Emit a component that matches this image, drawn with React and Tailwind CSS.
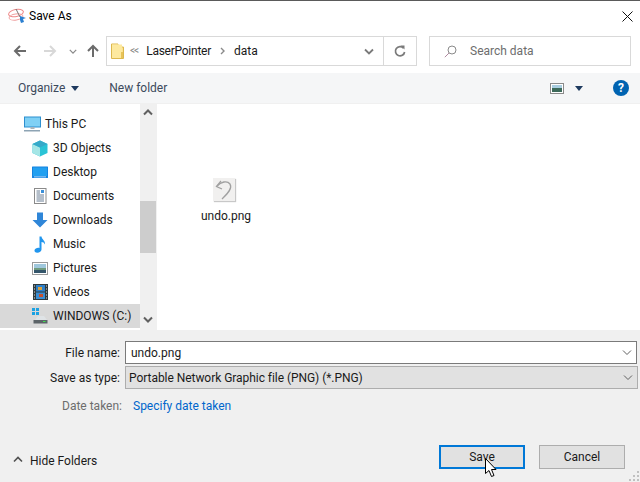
const F = { fontFamily: 'Roboto, "Open Sans", sans-serif' };

function Chevron({ up, className = "", color = "#5a5a5a", w = 1.6, size = 10 }) {
  return (
    <svg width={size} height="7" viewBox="0 0 10 7" className={className}>
      <path d={up ? "M1 5.5 L5 1.5 L9 5.5" : "M1 1.5 L5 5.5 L9 1.5"} fill="none" stroke={color} strokeWidth={w} />
    </svg>
  );
}

function Caret({ color = "#1e3a5f" }) {
  return (
    <svg width="8" height="5" viewBox="0 0 8 5"><path d="M0 0H8L4 5Z" fill={color} /></svg>
  );
}

function AppIcon() {
  return (
    <svg width="18" height="18" viewBox="0 0 18 18">
      <ellipse cx="8" cy="6" rx="7.5" ry="3.6" fill="none" stroke="#e88" strokeWidth="1" transform="rotate(-12 8 6)" />
      <ellipse cx="8" cy="10" rx="7" ry="3" fill="none" stroke="#f0a0a0" strokeWidth="1" transform="rotate(-8 8 10)" />
      <path d="M8 2 L12 10" stroke="#777" strokeWidth="1" />
      <path d="M12 9 L18 11 L15 12 L16 15 L13 16 L12 13 Z" fill="#2a7fd0" />
    </svg>
  );
}

function ArrowIcon({ color, dir = "left" }) {
  const d = dir === "left" ? "M13 7H2 M7 2 L2 7 L7 12" : dir === "right" ? "M1 7H12 M7 2 L12 7 L7 12" : "M7 13V2 M2 7 L7 2 L12 7";
  return (
    <svg width="14" height="14" viewBox="0 0 14 14"><path d={d} fill="none" stroke={color} strokeWidth="2" /></svg>
  );
}

const icons = {
  pc: (
    <svg width="17" height="17" viewBox="0 0 17 17">
      <rect x="0.5" y="1" width="16" height="10" fill="#7fd0f5" stroke="#2d8fcf" />
      <rect x="6.5" y="11" width="4" height="2" fill="#aab4bc" />
      <rect x="0" y="14" width="16" height="1.5" fill="#8ea4b4" />
    </svg>
  ),
  cube: (
    <svg width="16" height="17" viewBox="0 0 16 17">
      <path d="M8 0.5 L15.5 4 V13 L8 16.5 L0.5 13 V4 Z" fill="#2ac3d6" />
      <path d="M0.5 4 L8 7.5 V16.5 L0.5 13 Z" fill="#a5e6e6" />
      <path d="M8 0.5 L15.5 4 L8 7.5 L0.5 4 Z" fill="#36a9c9" />
    </svg>
  ),
  desktop: (
    <svg width="16" height="13" viewBox="0 0 16 13">
      <rect x="0" y="0.5" width="16" height="11.5" rx="0.5" fill="#1583e0" />
      <rect x="1" y="1.5" width="14" height="8.5" fill="#22a0f0" />
      <rect x="2" y="10.5" width="12" height="0.8" fill="#cfeaff" />
    </svg>
  ),
  doc: (
    <svg width="13" height="16" viewBox="0 0 13 16">
      <rect x="0.5" y="0.5" width="11.5" height="15" fill="#fff" stroke="#8a8a8a" />
      <path d="M2.5 3H6 M2.5 5H6 M2.5 7H10 M2.5 9H10 M2.5 11H10 M2.5 13H10" stroke="#6a7f95" strokeWidth="1" />
      <path d="M7 2H10V5H7Z" fill="#3b8fd8" />
    </svg>
  ),
  down: (
    <svg width="16" height="16" viewBox="0 0 16 16">
      <path d="M5 0.5H11V8H15.5L8 15.5L0.5 8H5Z" fill="#2f86d8" />
    </svg>
  ),
  music: (
    <svg width="12" height="17" viewBox="0 0 12 17">
      <path d="M5.5 0.5H7.5C7.8 3.5 11.5 4.5 11 8.5C10.3 6.8 9 6 7.5 6V13.5C7.5 15.5 5.5 16.7 3.3 16.7C1.3 16.7 0.3 15.6 0.5 14.3C0.8 12.6 3.5 11.4 5.5 12Z" fill="#2196ee" />
    </svg>
  ),
  pic: (
    <svg width="16" height="13" viewBox="0 0 16 13">
      <rect x="0.5" y="0.5" width="15" height="12" fill="#fff" stroke="#9a9a9a" />
      <rect x="2" y="2" width="12" height="4" fill="#9fc7dc" />
      <rect x="2" y="6" width="12" height="2" fill="#6f9a7d" />
      <rect x="2" y="8" width="12" height="3" fill="#34566b" />
    </svg>
  ),
  vid: (
    <svg width="15" height="16" viewBox="0 0 15 16">
      <rect x="0" y="0" width="15" height="16" fill="#2f3a3e" />
      <rect x="3" y="1" width="9" height="6.5" fill="#2d7fc9" />
      <rect x="3" y="8.5" width="9" height="6.5" fill="#3a8ed4" />
      <rect x="5" y="3" width="4" height="3" fill="#d9a13c" />
      <rect x="6" y="10" width="4" height="3" fill="#c9512e" />
      <path d="M1 2H2 M1 5H2 M1 8H2 M1 11H2 M1 14H2 M13 2H14 M13 5H14 M13 8H14 M13 11H14 M13 14H14" stroke="#ddd" strokeWidth="1" />
    </svg>
  ),
  drive: (
    <svg width="16" height="16" viewBox="0 0 16 16">
      <rect x="0" y="0" width="3" height="3" fill="#1ba1e2" />
      <rect x="4" y="0" width="3" height="3" fill="#1ba1e2" />
      <rect x="0" y="4" width="3" height="3" fill="#1ba1e2" />
      <rect x="4" y="4" width="3" height="3" fill="#1ba1e2" />
      <path d="M3 12 L6 8 H12 L15 12Z" fill="#dfe3e6" />
      <rect x="1.5" y="12" width="14" height="3.5" fill="#5c6468" />
      <rect x="11" y="13" width="2.5" height="1" fill="#3fe04f" />
    </svg>
  ),
};

const rows = [
  ["This PC", icons.pc, 1],
  ["3D Objects", icons.cube, 2],
  ["Desktop", icons.desktop, 2],
  ["Documents", icons.doc, 2],
  ["Downloads", icons.down, 2],
  ["Music", icons.music, 2],
  ["Pictures", icons.pic, 2],
  ["Videos", icons.vid, 2],
  ["WINDOWS (C:)", icons.drive, 2, true],
];

function NavRow({ label, icon, level, selected }) {
  return (
    <div className={`flex items-center h-6 ${selected ? "bg-[#d9d9d9]" : ""} ${level === 1 ? "pl-6" : "pl-8"}`}>
      <span className={`flex items-center justify-center h-5 ${level === 1 ? "w-[17px] mr-1" : "w-4 mr-[5px]"}`}>{icon}</span>
      <span className="text-[12px] text-[#1a1a1a] whitespace-nowrap">{label}</span>
    </div>
  );
}

export default function App() {
  return (
    <div style={F} className="relative w-[640px] h-[482px] bg-white overflow-hidden flex flex-col border-t border-[#5a5a5a]">
      {/* Title bar */}
      <div className="h-[30px] flex items-center pl-2 pr-[7px] shrink-0">
        <AppIcon />
        <span className="ml-[3px] text-[12px] text-black">Save As</span>
        <svg width="11" height="11" viewBox="0 0 11 11" className="ml-auto">
          <path d="M0.5 0.5L10.5 10.5M10.5 0.5L0.5 10.5" stroke="#111" strokeWidth="1" fill="none" />
        </svg>
      </div>

      {/* Address row */}
      <div className="h-[42px] shrink-0 flex items-start pt-[5px]">
        <div className="w-[106px] h-[30px] flex items-center pl-[13px]">
          <ArrowIcon color="#6b6b6b" />
          <span className="ml-[16px]"><ArrowIcon color="#d8d8d8" dir="right" /></span>
          <Chevron className="ml-[12px]" color="#8a8a8a" size={8} />
          <span className="ml-[9px]"><ArrowIcon color="#6b6b6b" dir="up" /></span>
        </div>
        <div className="w-[311px] h-[30px] border border-[#d9d9d9] flex items-center">
          <svg width="13" height="16" viewBox="0 0 13 16" className="ml-1">
            <path d="M0.5 1H6L7 1V4H12.5V15.5H0.5Z" fill="#fde28e" stroke="#dcb84e" />
            <rect x="1" y="1.5" width="10" height="13.5" fill="#fde99f" />
            <rect x="10" y="9" width="2" height="6" fill="#e8c358" />
          </svg>
          <span className="ml-[6px] text-[10px] text-[#8a8a8a] leading-none tracking-[-1px]">&lt;&lt;</span>
          <span className="ml-[8px] text-[12px] text-[#1a1a1a] tracking-[-0.25px]">LaserPointer</span>
          <svg width="5" height="8" viewBox="0 0 5 8" className="ml-[9px]">
            <path d="M1 1L4 4L1 7" fill="none" stroke="#8a8a8a" strokeWidth="1.4" />
          </svg>
          <span className="ml-[9px] text-[12px] text-[#1a1a1a]">data</span>
          <Chevron className="ml-auto mr-[9px]" color="#7a7a7a" w="1.8" />
          <div className="w-[33px] h-full border-l border-[#d9d9d9] flex items-center justify-center">
            <svg width="12" height="13" viewBox="0 0 12 13">
              <path d="M9.5 3.2A4.6 4.6 0 1 0 10.6 7" fill="none" stroke="#7a7a7a" strokeWidth="1.7" />
              <path d="M6.5 0.5H10.5V4.5Z" fill="#7a7a7a" />
            </svg>
          </div>
        </div>
        <div className="ml-3 w-[202px] h-[30px] border border-[#d9d9d9] flex items-center pl-[14px]">
          <svg width="13" height="13" viewBox="0 0 13 13">
            <circle cx="8" cy="5" r="4" fill="none" stroke="#8a8a8a" />
            <path d="M5 8L0.8 12.2" stroke="#b08aa0" strokeWidth="1" />
          </svg>
          <span className="ml-[13px] text-[12px] text-[#6d6d6d]">Search data</span>
        </div>
      </div>

      {/* Toolbar */}
      <div className="h-[30px] bg-[#f5f6f7] shrink-0 flex items-center pl-[18px] pr-[11px]">
        <span className="text-[12px] text-[#3c4a5c]">Organize</span>
        <span className="ml-[6px]"><Caret /></span>
        <span className="ml-[30px] text-[12px] text-[#3c4a5c]">New folder</span>
        <svg width="14" height="11" viewBox="0 0 14 11" className="ml-auto">
          <rect x="0.5" y="0.5" width="13" height="10" fill="#fff" stroke="#8a8a8a" />
          <rect x="2" y="2" width="10" height="3" fill="#a8cde0" />
          <rect x="2" y="5" width="10" height="4" fill="#3d6a5a" />
        </svg>
        <span className="ml-[11px]"><Caret /></span>
        <span className="ml-[30px] w-4 h-4 rounded-full bg-[#0063b1] text-white text-[12px] font-bold flex items-center justify-center leading-none">?</span>
      </div>

      {/* Navigation + content */}
      <div className="h-[227px] shrink-0 flex border-t border-[#f0f0f0]">
        <div className="w-[140px] pt-2 flex flex-col bg-white">
          {rows.map(([label, icon, level, sel]) => (
            <NavRow key={label} label={label} icon={icon} level={level} selected={sel} />
          ))}
        </div>
        <div className="w-[16px] bg-[#f0f0f0] flex flex-col">
          <div className="h-[17px] flex items-center justify-center"><Chevron up color="#606060" w="2" /></div>
          <div className="mt-[80px] h-[52px] bg-[#cdcdcd]" />
          <div className="mt-auto h-[17px] flex items-center justify-center mb-[2px]"><Chevron color="#606060" w="2" /></div>
        </div>
        <div className="flex-1 border-l border-[#f0f0f0] pl-[43px] pt-[74px]">
          <div className="w-[52px] flex flex-col items-center">
            <div className="w-[22px] h-[23px] mr-[4px] bg-[#f1f0ef] shadow-[1px_1px_1px_#c8c8c8] flex items-center justify-center">
              <svg width="22" height="23" viewBox="0 0 22 23">
                <path d="M4 8C8 4 14 2 17 6C20 11 13 17 9 21" fill="none" stroke="#a0a0a0" strokeWidth="1.3" />
                <path d="M8 3L3.5 8.5L9 11" fill="none" stroke="#a0a0a0" strokeWidth="1.3" />
              </svg>
            </div>
            <span className="mt-[7px] text-[12px] text-[#1a1a1a] leading-[16px]">undo.png</span>
          </div>
        </div>
      </div>

      {/* Bottom form */}
      <div className="flex-1 bg-[#f0f0f0] flex flex-col pt-[11px]">
        <div className="flex items-center h-[23px]">
          <span className="w-[120px] text-right text-[12px] text-[#1a1a1a]">File name:</span>
          <div className="ml-[5px] w-[512px] h-[23px] bg-white border border-[#7a7a7a] flex items-center pl-[5px] pr-[4px]">
            <span className="text-[12px] text-[#1a1a1a]">undo.png</span>
            <Chevron className="ml-auto" color="#606060" w="1" />
          </div>
        </div>
        <div className="flex items-center h-[23px] mt-[2px]">
          <span className="w-[120px] text-right text-[12px] text-[#1a1a1a]">Save as type:</span>
          <div className="ml-[5px] w-[513px] h-[23px] bg-[#e1e1e1] border border-[#adadad] flex items-center pl-[3px] pr-[4px]">
            <span className="text-[12px] text-[#1a1a1a] tracking-[-0.05px]">Portable Network Graphic file (PNG) (*.PNG)</span>
            <Chevron className="ml-auto" color="#606060" w="1" />
          </div>
        </div>
        <div className="flex items-center h-[20px] mt-[7px]">
          <span className="w-[122px] text-right text-[12px] text-[#6d6d6d]">Date taken:</span>
          <span className="ml-[11px] text-[12px] text-[#0066cc]">Specify date taken</span>
        </div>
        <div className="flex items-start mt-[29px] pl-[13px] pr-[15px]">
          <span className="mt-[11px]"><Chevron up color="#505050" w="1.6" /></span>
          <span className="mt-[7px] ml-[7px] text-[12px] text-[#1a1a1a]">Hide Folders</span>
          <button className="ml-auto w-[86px] h-[24px] bg-[#e1e1e1] border-2 border-[#0078d7] text-[12px] text-[#1a1a1a]">Save</button>
          <button className="ml-[14px] w-[86px] h-[24px] bg-[#e1e1e1] border border-[#adadad] text-[12px] text-[#1a1a1a]">Cancel</button>
        </div>
      </div>

      {/* Resize grip */}
      <svg width="12" height="12" viewBox="0 0 12 12" className="absolute right-0 bottom-0">
        <path d="M9 1h2v2h-2zM5 5h2v2h-2zM9 5h2v2h-2zM1 9h2v2h-2zM5 9h2v2h-2zM9 9h2v2h-2z" fill="#c0c0c0" />
      </svg>
      {/* Mouse pointer */}
      <svg width="13" height="20" viewBox="0 0 13 20" className="absolute left-[485px] top-[457px]">
        <path d="M0.5 0.5V15.5L4 12.5L6.5 18.5L9 17.5L6.5 11.5H11Z" fill="#fff" stroke="#000" strokeWidth="1" />
      </svg>
    </div>
  );
}
